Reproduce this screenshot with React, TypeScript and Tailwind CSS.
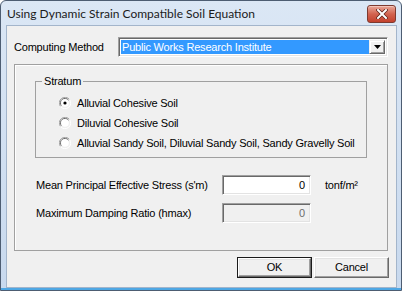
function Radio({ checked }: { checked?: boolean }) {
  return (
    <svg width="12" height="12" viewBox="0 0 12 12" className="shrink-0">
      <path d="M10.5 2.5 A5.5 5.5 0 0 0 1.5 9.5" fill="none" stroke="#a0a0a0" strokeWidth="1" />
      <path d="M9.5 3.2 A4.3 4.3 0 0 0 2.4 8.6" fill="none" stroke="#696969" strokeWidth="1" />
      <path d="M1.5 9.5 A5.5 5.5 0 0 0 10.5 2.5" fill="none" stroke="#ffffff" strokeWidth="1" />
      <circle cx="6" cy="6" r="3.8" fill="#ffffff" />
      {checked && <circle cx="6" cy="6" r="1.6" fill="#000000" />}
    </svg>
  );
}

function Button({ label, isDefault }: { label: string; isDefault?: boolean }) {
  return (
    <div className={`w-[75px] h-[21px] ${isDefault ? "border border-[#1a1a1a]" : ""} flex`}>
      <button className="flex-1 flex items-center justify-center bg-[#f0f0f0] border border-t-white border-l-white border-r-[#696969] border-b-[#696969] shadow-[inset_-1px_-1px_0_#a0a0a0,inset_1px_1px_0_#e3e3e3] text-[11px] text-black tracking-[-0.2px]">
        {label}
      </button>
    </div>
  );
}

const sunken =
  "w-[89px] h-[20px] shrink-0 border border-t-[#a0a0a0] border-l-[#a0a0a0] border-r-white border-b-white shadow-[inset_1px_1px_0_#696969,inset_-1px_-1px_0_#e3e3e3] flex items-center justify-end pr-[5px]";

export default function App() {
  return (
    <div className="w-[402px] h-[291px] bg-white font-['Liberation_Sans',Arial,sans-serif] text-[11px] text-black tracking-[-0.2px]">
      <div className="w-full h-full flex flex-col border border-[#4d5d72] rounded-t-[6px] bg-gradient-to-b from-[#dbe7f5] to-[#c8d9ee] shadow-[inset_0_-2px_0_#4ea7e4]">
        {/* Title bar */}
        <div className="h-[24px] flex items-center justify-between pl-[6px] pr-[5px]">
          <span className="text-[12px] text-[#1b1b1b] tracking-normal font-['Lato',sans-serif] mt-[1px]">
            Using Dynamic Strain Compatible Soil Equation
          </span>
          <div className="w-[29px] h-[18px] mt-[1px] rounded-[3px] border border-[#7d3a30] bg-gradient-to-b from-[#e7a698] via-[#d2634f] to-[#c3412d] flex items-center justify-center shadow-[inset_0_1px_0_#f3c4b9]">
            <svg width="12" height="10" viewBox="0 0 12 10">
              <path d="M2 1 L10 9 M10 1 L2 9" stroke="#5a1f16" strokeWidth="3.4" strokeLinecap="square" />
              <path d="M2 1 L10 9 M10 1 L2 9" stroke="#ffffff" strokeWidth="2" strokeLinecap="square" />
            </svg>
          </div>
        </div>

        {/* Client area */}
        <div className="flex-1 ml-[5px] mr-[4px] mb-[2px] bg-[#f0f0f0] border border-[#a3b5cb] flex flex-col pl-[7px] pr-[8px]">
          <div className="flex items-center mt-[11px] h-[20px]">
            <span className="w-[104px] shrink-0">Computing Method</span>
            <div className="flex-1 h-[20px] flex bg-white border border-t-[#a0a0a0] border-l-[#a0a0a0] border-r-white border-b-white shadow-[inset_1px_1px_0_#696969,inset_-1px_-1px_0_#e3e3e3] p-[2px]">
              <div className="flex-1 bg-[#3399ff] text-white flex items-center pl-[1px] leading-none">
                Public Works Research Institute
              </div>
              <div className="w-[16px] bg-[#f0f0f0] border border-t-[#f0f0f0] border-l-[#f0f0f0] border-r-[#696969] border-b-[#696969] shadow-[inset_1px_1px_0_#fff,inset_-1px_-1px_0_#a0a0a0] flex items-center justify-center">
                <svg width="7" height="4" viewBox="0 0 7 4">
                  <path d="M0 0 H7 L3.5 4 Z" fill="#000" />
                </svg>
              </div>
            </div>
          </div>

          {/* Panel */}
          <div className="mt-[7px] h-[187px] border border-[#a0a0a0] shadow-[inset_1px_1px_0_#fff] flex flex-col pl-[20px] pr-[20px]">
            <fieldset className="mt-[10px] border border-[#a0a0a0] pt-[5px] pb-[4px]">
              <legend className="ml-[6px] px-[2px] leading-[13px]">Stratum</legend>
              <div className="flex flex-col pl-[23px]">
                <div className="h-[20px] flex items-center gap-[6px]">
                  <Radio checked />
                  <span>Alluvial Cohesive Soil</span>
                </div>
                <div className="h-[20px] flex items-center gap-[6px]">
                  <Radio />
                  <span>Diluvial Cohesive Soil</span>
                </div>
                <div className="h-[20px] flex items-center gap-[6px]">
                  <Radio />
                  <span className="whitespace-nowrap">Alluvial Sandy Soil, Diluvial Sandy Soil, Sandy Gravelly Soil</span>
                </div>
              </div>
            </fieldset>

            <div className="mt-[17px] ml-[1px] flex items-center h-[20px]">
              <span className="w-[186px] shrink-0">Mean Principal Effective Stress (s'm)</span>
              <div className={`${sunken} bg-white`}>0</div>
              <span className="ml-[14px] whitespace-nowrap">tonf/m²</span>
            </div>
            <div className="mt-[8px] ml-[1px] flex items-center h-[20px]">
              <span className="w-[186px] shrink-0">Maximum Damping Ratio (hmax)</span>
              <div className={`${sunken} bg-[#f0f0f0] text-[#6d6d6d]`}>0</div>
            </div>
          </div>

          <div className="mt-[6px] flex justify-end gap-[2px] mr-[-1px]">
            <Button label="OK" isDefault />
            <Button label="Cancel" />
          </div>
        </div>
      </div>
    </div>
  );
}
